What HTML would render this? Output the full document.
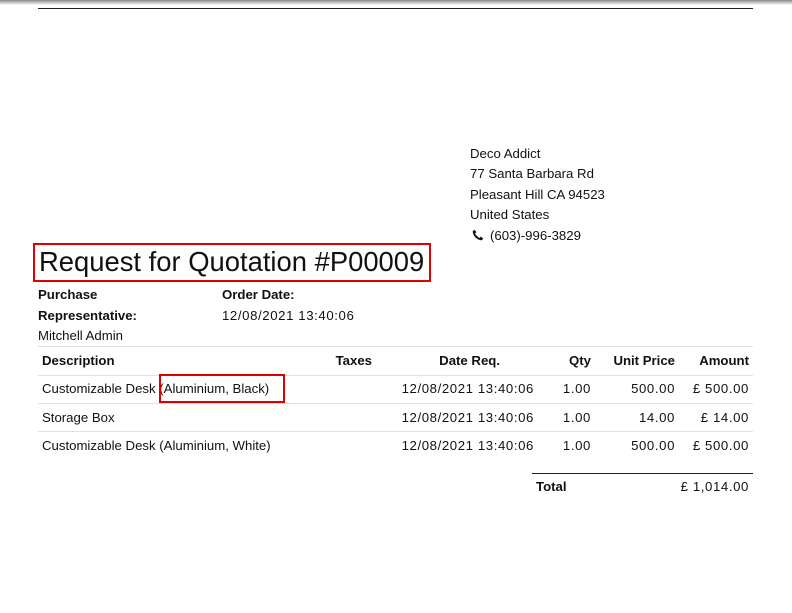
<!DOCTYPE html>
<html><head><meta charset="utf-8"><style>
body{margin:0;width:792px;height:613px;background:#fff;position:relative;overflow:hidden;font-family:"Liberation Sans",sans-serif;font-size:13.2px;color:#111}
.a{position:absolute;white-space:nowrap;line-height:16px}
.r{text-align:right}
.b{font-weight:bold}
.d{letter-spacing:.6px}
.hl{position:absolute;height:1px;background:#dee2e6}
</style></head><body>
<div style="position:absolute;left:0;top:0;width:792px;height:5px;background:linear-gradient(#888,#fff)"></div>
<div style="position:absolute;left:38px;top:8px;width:715px;height:1px;background:#222"></div>

<div class="a" style="left:470px;top:146px">Deco Addict</div>
<div class="a" style="left:470px;top:166px">77 Santa Barbara Rd</div>
<div class="a" style="left:470px;top:187px">Pleasant Hill CA 94523</div>
<div class="a" style="left:470px;top:207px">United States</div>
<div class="a" style="left:472px;top:228px"><svg width="12" height="12" viewBox="0 0 16 16" style="vertical-align:-1px;margin-right:6px"><path d="M3 1l3 3-2 2c1 2 4 5 6 6l2-2 3 3-2 2C7 15 1 9 1 3z" fill="#111"/></svg>(603)-996-3829</div>

<div style="position:absolute;left:33px;top:243px;width:394px;height:35px;border:2px solid #e00000"></div>
<div class="a" style="left:39px;top:246px;font-size:27.4px;line-height:32px">Request for Quotation #P00009</div>

<div class="a b" style="left:38px;top:287px">Purchase</div>
<div class="a b" style="left:38px;top:308px">Representative:</div>
<div class="a" style="left:38px;top:328px">Mitchell Admin</div>
<div class="a b" style="left:222px;top:287px">Order Date:</div>
<div class="a d" style="left:222px;top:308px">12/08/2021 13:40:06</div>

<div class="hl" style="left:38px;top:346px;width:715px"></div>
<div class="a b" style="left:42px;top:353px">Description</div>
<div class="a b r" style="left:300px;width:72px;top:353px">Taxes</div>
<div class="a b r" style="left:400px;width:100px;top:353px">Date Req.</div>
<div class="a b r" style="left:540px;width:51px;top:353px">Qty</div>
<div class="a b r" style="left:600px;width:75px;top:353px">Unit Price</div>
<div class="a b r" style="left:680px;width:69px;top:353px">Amount</div>

<div class="hl" style="left:38px;top:375px;width:715px"></div>
<div class="a" style="left:42px;top:381px">Customizable Desk (Aluminium, Black)</div>
<div style="position:absolute;left:159px;top:374px;width:122px;height:25px;border:2px solid #e00000"></div>
<div class="a r d" style="left:380px;width:154px;top:381px">12/08/2021 13:40:06</div>
<div class="a r d" style="left:540px;width:51px;top:381px">1.00</div>
<div class="a r d" style="left:600px;width:75px;top:381px">500.00</div>
<div class="a r d" style="left:660px;width:89px;top:381px">£ 500.00</div>

<div class="hl" style="left:38px;top:403px;width:715px"></div>
<div class="a" style="left:42px;top:410px">Storage Box</div>
<div class="a r d" style="left:380px;width:154px;top:410px">12/08/2021 13:40:06</div>
<div class="a r d" style="left:540px;width:51px;top:410px">1.00</div>
<div class="a r d" style="left:600px;width:75px;top:410px">14.00</div>
<div class="a r d" style="left:660px;width:89px;top:410px">£ 14.00</div>

<div class="hl" style="left:38px;top:431px;width:715px"></div>
<div class="a" style="left:42px;top:438px">Customizable Desk (Aluminium, White)</div>
<div class="a r d" style="left:380px;width:154px;top:438px">12/08/2021 13:40:06</div>
<div class="a r d" style="left:540px;width:51px;top:438px">1.00</div>
<div class="a r d" style="left:600px;width:75px;top:438px">500.00</div>
<div class="a r d" style="left:660px;width:89px;top:438px">£ 500.00</div>

<div style="position:absolute;left:532px;top:473px;width:221px;height:1px;background:#222"></div>
<div class="a b" style="left:536px;top:479px">Total</div>
<div class="a r d" style="left:640px;width:109px;top:479px">£ 1,014.00</div>
</body></html>
